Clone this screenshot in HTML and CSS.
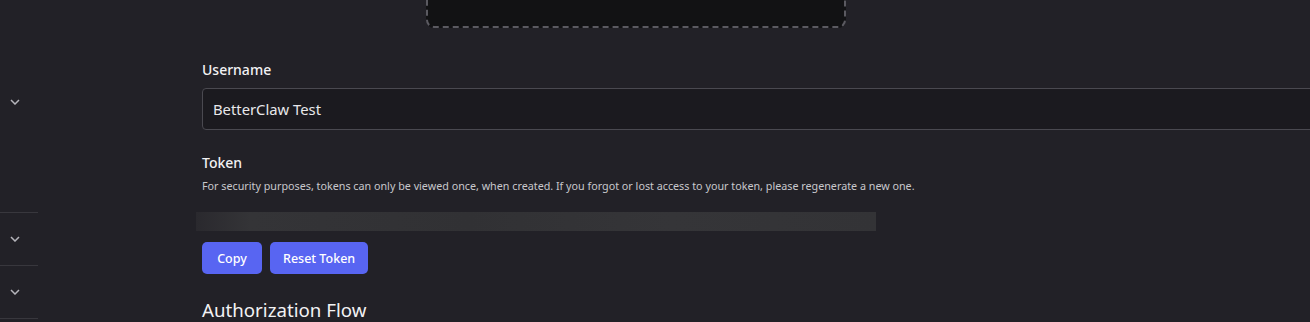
FILE: index.html
```html
<!DOCTYPE html>
<html>
<head>
<meta charset="utf-8">
<link rel="stylesheet" href="styles.css">
</head>
<body>
<div class="page">
  <aside class="sidebar">
    <div class="side-top">
      <svg class="chev" viewBox="0 0 10 6" width="10" height="6"><path d="M1 1l4 4 4-4" fill="none" stroke="#b5b5bb" stroke-width="1.5"/></svg>
    </div>
    <div class="side-item">
      <svg class="chev" viewBox="0 0 10 6" width="10" height="6"><path d="M1 1l4 4 4-4" fill="none" stroke="#b5b5bb" stroke-width="1.5"/></svg>
    </div>
    <div class="side-item">
      <svg class="chev" viewBox="0 0 10 6" width="10" height="6"><path d="M1 1l4 4 4-4" fill="none" stroke="#b5b5bb" stroke-width="1.5"/></svg>
    </div>
  </aside>
  <main class="main">
    <div class="dropzone"></div>
    <label class="label label-user">Username</label>
    <div class="input">BetterClaw Test</div>
    <label class="label label-token">Token</label>
    <p class="desc">For security purposes, tokens can only be viewed once, when created. If you forgot or lost access to your token, please regenerate a new one.</p>
    <div class="token-blur"></div>
    <div class="buttons">
      <button class="btn btn-copy">Copy</button>
      <button class="btn">Reset Token</button>
    </div>
    <h2 class="heading">Authorization Flow</h2>
  </main>
</div>
</body>
</html>
```

FILE: styles.css
```css
html, body {
  margin: 0;
  padding: 0;
  background: #222127;
  overflow: hidden;
}
body {
  font-family: "Noto Sans", "DejaVu Sans", sans-serif;
  color: #f2f3f5;
}
.page {
  display: flex;
  width: 1310px;
  height: 322px;
  overflow: hidden;
}
.sidebar {
  width: 38px;
  flex: none;
  display: flex;
  flex-direction: column;
}
.side-top {
  height: 213px;
  box-sizing: border-box;
  border-bottom: 1px solid #38373d;
  display: flex;
  justify-content: center;
  padding-top: 99px;
  padding-right: 9px;
}
.side-item {
  height: 53px;
  box-sizing: border-box;
  border-bottom: 1px solid #38373d;
  display: flex;
  justify-content: center;
  align-items: center;
  padding-right: 9px;
}
.chev { display: block; }
.main {
  flex: 1;
  padding-left: 164px;
  display: flex;
  flex-direction: column;
  align-items: flex-start;
  min-width: 0;
  overflow: hidden;
}
.dropzone {
  width: 420px;
  height: 60px;
  margin-top: -32px;
  margin-left: 224px;
  box-sizing: border-box;
  background: #121214;
  border: 2px dashed #5b5a61;
  border-radius: 8px;
  flex: none;
}
.label {
  font-size: 14px;
  font-weight: 500;
  line-height: 18px;
  color: #f2f2f4;
}
.label-user { margin-top: 33px; }
.input {
  margin-top: 9px;
  width: 1200px;
  height: 42px;
  box-sizing: border-box;
  background: #1b1a1f;
  border: 1px solid #4a4950;
  border-radius: 4px;
  padding: 0 10px;
  display: flex;
  align-items: center;
  font-size: 14.8px;
  color: #e8e8ea;
  flex: none;
}
.label-token { margin-top: 24px; }
.desc {
  margin: 7px 0 0;
  font-size: 10.75px;
  line-height: 14px;
  color: #c8c8cc;
}
.token-blur {
  margin-top: 19px;
  margin-left: -6px;
  width: 680px;
  height: 19px;
  background: linear-gradient(90deg, #2a292e 0%, #343437 8%, #313134 40%, #353538 70%, #333336 100%);
  flex: none;
}
.buttons {
  display: flex;
  gap: 8px;
  margin-top: 11px;
}
.btn {
  height: 32px;
  padding: 0 13px;
  border: none;
  border-radius: 5px;
  background: #5865f2;
  color: #ffffff;
  font-family: "Noto Sans", "DejaVu Sans", sans-serif;
  font-size: 12.5px;
  font-weight: 500;
}
.btn-copy { width: 60px; padding: 0; }
.heading {
  margin: 24px 0 0;
  font-size: 18.7px;
  font-weight: 400;
  line-height: 24px;
  color: #f2f2f4;
}
```
